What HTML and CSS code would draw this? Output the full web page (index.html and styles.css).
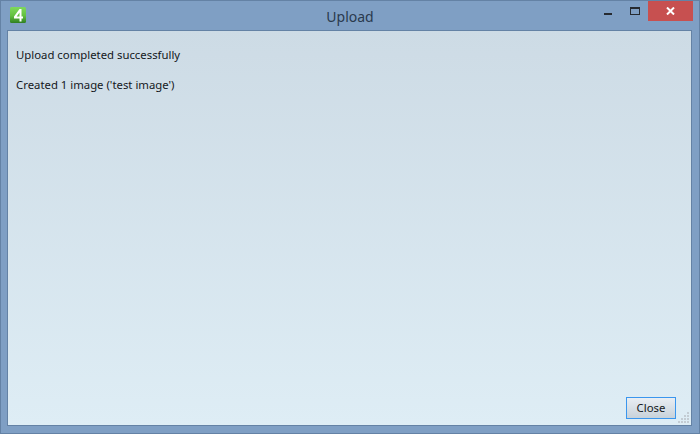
FILE: index.html
```html
<!DOCTYPE html>
<html lang="en">
<head>
<meta charset="utf-8">
<title>Upload</title>
<link rel="stylesheet" href="styles.css">
</head>
<body>
<div class="window">
  <header class="titlebar">
    <svg class="app-icon" width="16" height="16" viewBox="0 0 16 16">
      <defs>
        <linearGradient id="g" x1="0" y1="0" x2="0" y2="1">
          <stop offset="0" stop-color="#7fd95c"/>
          <stop offset="0.55" stop-color="#62c040"/>
          <stop offset="1" stop-color="#2f7f22"/>
        </linearGradient>
      </defs>
      <rect width="16" height="16" rx="1.5" fill="url(#g)"/>
      <path d="M9.5 2 L4 9.5 V11.5 H9.5 V14.5 H11.5 V11.5 H13 V9.5 H11.5 V2 Z M9.5 5.6 V9.5 H6.7 Z" fill="#fff" fill-rule="evenodd"/>
    </svg>
    <div class="title">Upload</div>
    <div class="controls">
      <button class="ctl ctl-min"><svg width="10" height="10" viewBox="0 0 10 10"><rect x="1" y="7" width="8" height="2" fill="#262a30"/></svg></button>
      <button class="ctl ctl-max"><svg width="10" height="8" viewBox="0 0 10 8"><path d="M0 0H10V8H0Z M1 2V7H9V2Z" fill="#262a30" fill-rule="evenodd"/></svg></button>
      <button class="ctl ctl-close"><svg width="9" height="8" viewBox="0 0 9 8"><path d="M1 0.5 L8 7.5 M8 0.5 L1 7.5" stroke="#fff" stroke-width="2" fill="none"/></svg></button>
    </div>
  </header>
  <main class="content">
    <div class="messages">
      <p class="msg">Upload completed successfully</p>
      <p class="msg">Created 1 image ('test image')</p>
    </div>
    <div class="footer"><button class="close-btn">Close</button></div>
    <svg class="grip" width="12" height="12" viewBox="0 0 12 12" fill="#c3ccd3">
      <rect x="9" y="0" width="2" height="2"/>
      <rect x="6" y="3" width="2" height="2"/><rect x="9" y="3" width="2" height="2"/>
      <rect x="3" y="6" width="2" height="2"/><rect x="6" y="6" width="2" height="2"/><rect x="9" y="6" width="2" height="2"/>
      <rect x="0" y="9" width="2" height="2"/><rect x="3" y="9" width="2" height="2"/><rect x="6" y="9" width="2" height="2"/><rect x="9" y="9" width="2" height="2"/>
    </svg>
  </main>
</div>
</body>
</html>
```
FILE: styles.css
```css
* { box-sizing: border-box; }
html, body { margin: 0; padding: 0; }
body { width: 700px; height: 434px; overflow: hidden; font-family: "Noto Sans", "Open Sans", sans-serif; }
.window {
  width: 700px; height: 434px;
  background: #7f9fc4;
  border: 1px solid #6482a5;
  display: flex; flex-direction: column;
  padding: 0 7px 7px 6px;
}
.titlebar {
  height: 29px; flex: none;
  display: flex; align-items: flex-start;
  margin: 0 -7px 0 -6px;
  padding: 6px 6px 0 9px;
}
.app-icon { flex: none; }
.title {
  flex: 1; text-align: center;
  font-size: 14px; line-height: 19px; color: #2a3a4e;
  padding: 0 0 0 80px;
}
.controls { display: flex; align-items: flex-start; margin-top: -6px; }
.ctl { border: 0; padding: 0; background: none; display: flex; align-items: center; justify-content: center; height: 20px; }
.ctl-min { width: 28px; }
.ctl-max { width: 26px; }
.ctl-close { width: 45px; background: #c75050; }
.content {
  flex: 1;
  position: relative;
  border: 1px solid #6482a5;
  background: linear-gradient(to bottom, #cddbe5, #deedf5);
  display: flex; flex-direction: column;
  padding: 16px 7px 6px 8px;
}
.messages { flex: 1; display: flex; flex-direction: column; gap: 14px; }
.msg { margin: 0; font-size: 11.35px; line-height: 16px; color: #14181c; }
.footer { display: flex; justify-content: flex-end; margin-right: 8px; }
.close-btn {
  width: 50px; height: 22px; padding: 0;
  border: 1px solid #3a96ee;
  background: linear-gradient(to bottom, #e9eef3, #c8d2da);
  font: 11.35px/18px "Noto Sans", sans-serif; color: #14181c;
}
.grip { position: absolute; right: 1px; bottom: 1px; }
```
